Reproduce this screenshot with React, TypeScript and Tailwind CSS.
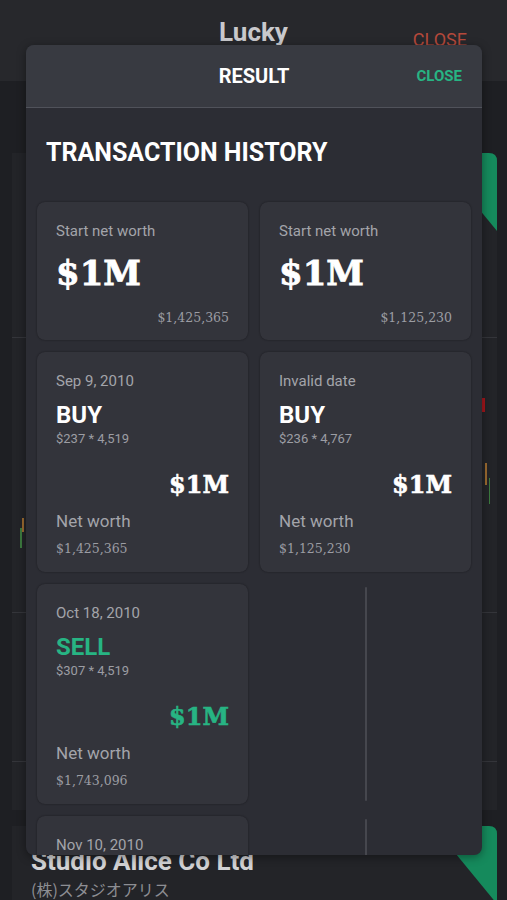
import React from 'react';

type Tx = {
  date: string;
  side: 'BUY' | 'SELL';
  price: string;
  amount: string;
  netWorth: string;
};

const startCards = [{ value: '$1,425,365' }, { value: '$1,125,230' }];

const rows: Array<[Tx, Tx | null]> = [
  [
    { date: 'Sep 9, 2010', side: 'BUY', price: '$237 * 4,519', amount: '$1M', netWorth: '$1,425,365' },
    { date: 'Invalid date', side: 'BUY', price: '$236 * 4,767', amount: '$1M', netWorth: '$1,125,230' },
  ],
  [{ date: 'Oct 18, 2010', side: 'SELL', price: '$307 * 4,519', amount: '$1M', netWorth: '$1,743,096' }, null],
  [{ date: 'Nov 10, 2010', side: 'BUY', price: '$262 * 4,519', amount: '$1M', netWorth: '$1,502,118' }, null],
];

function Ribbon() {
  return (
    <svg width="64" height="78" viewBox="0 0 64 78" className="block">
      <path d="M0 0 H56 Q64 0 64 8 V78 Z" fill="#158a5c" />
    </svg>
  );
}

function StartCard({ value }: { value: string }) {
  return (
    <div className="flex h-[138px] flex-col rounded-lg bg-[#33343b] px-[19px] pt-[19px] shadow-[0_0_2px_rgba(0,0,0,0.45)]">
      <div className="text-[15px] leading-5 text-[#a3a4aa]">Start net worth</div>
      <div className="mt-3 font-['DejaVu_Serif',serif] text-[34px] font-bold leading-10 text-white [-webkit-text-stroke:0.8px_currentColor]">
        $1M
      </div>
      <div className="mt-[17px] text-right font-['DejaVu_Serif',serif] text-[12.5px] leading-4 text-[#9c9da3]">{value}</div>
    </div>
  );
}

function TxCard({ tx }: { tx: Tx }) {
  const sell = tx.side === 'SELL';
  return (
    <div className="flex h-[220px] flex-col rounded-lg bg-[#33343b] px-[19px] pt-[19px] shadow-[0_0_2px_rgba(0,0,0,0.45)]">
      <div className="text-[15px] leading-5 text-[#a3a4aa]">{tx.date}</div>
      <div className={`mt-[10px] text-[24px] font-bold leading-7 ${sell ? 'text-[#27b483]' : 'text-white'}`}>{tx.side}</div>
      <div className="mt-[2px] text-[13px] leading-4 text-[#9c9da3]">{tx.price}</div>
      <div
        className={`mt-[23px] text-right font-['DejaVu_Serif',serif] text-[24px] font-bold leading-[30px] [-webkit-text-stroke:0.6px_currentColor] ${
          sell ? 'text-[#27b483]' : 'text-white'
        }`}
      >
        {tx.amount}
      </div>
      <div className="mt-[10px] text-[17px] leading-[22px] text-[#a3a4aa]">Net worth</div>
      <div className="mt-[9px] font-['DejaVu_Serif',serif] text-[12.5px] leading-4 text-[#9c9da3]">{tx.netWorth}</div>
    </div>
  );
}

function EmptyCell() {
  return (
    <div className="flex h-[220px] justify-center py-[3px]">
      <div className="w-[2px] rounded-full bg-[#46474e]" />
    </div>
  );
}

export default function App() {
  return (
    <div className="relative h-[900px] w-[507px] overflow-hidden bg-[#1e1f23] font-['Roboto',sans-serif]">
      {/* page behind the dialog */}
      <div className="relative flex h-[81px] justify-center bg-[#27282c]">
        <div className="pt-[16px] text-[26px] font-bold leading-8 text-[#c9c9cc]">Lucky</div>
        <div className="absolute right-[40px] top-[28px] text-[18px] leading-6 text-[#b5493b]">CLOSE</div>
      </div>
      <div className="pl-[12px] pr-[10px] pt-[72px]">
        <div className="relative h-[657px] rounded-tr-lg bg-[#232428]">
          <div className="absolute right-0 top-0">
            <Ribbon />
          </div>
          <div className="h-[185px] border-b border-[#34353a]" />
          <div className="relative h-[275px] border-b border-[#34353a]">
            <div className="absolute right-[12px] top-[60px] h-[14px] w-[3px] bg-[#a3161c]" />
            <div className="absolute right-[10px] top-[125px] h-[22px] w-[2px] bg-[#9a6a30]" />
            <div className="absolute right-[7px] top-[140px] h-[26px] w-[1px] bg-[#3c7a3f]" />
            <div className="absolute left-[10px] top-[180px] h-[14px] w-[2px] bg-[#9a6a30]" />
            <div className="absolute left-[8px] top-[190px] h-[20px] w-[2px] bg-[#3c7a3f]" />
          </div>
          <div className="h-[149px] border-b border-[#34353a]" />
        </div>
        <div className="relative mt-[16px] h-[120px] rounded-tr-lg bg-[#232428] pl-[19px] pt-[19px]">
          <div className="absolute right-0 top-0">
            <Ribbon />
          </div>
          <div className="text-[26px] font-bold leading-8 text-[#d2d2d4]">Studio Alice Co Ltd</div>
          <div className="font-['Noto_Sans_CJK_JP',sans-serif] text-[16px] leading-6 text-[#8d8e93]">(株)スタジオアリス</div>
        </div>
      </div>

      {/* result dialog */}
      <div className="absolute left-[26px] top-[45px] flex h-[810px] w-[456px] flex-col overflow-hidden rounded-lg bg-[#2c2d34] shadow-[0_2px_10px_rgba(0,0,0,0.4)]">
        <div className="relative flex h-[63px] shrink-0 items-center justify-center border-b border-[#50525a] bg-[#383a41]">
          <span className="text-[20px] font-bold text-white">RESULT</span>
          <button className="absolute right-[20px] text-[15px] font-bold text-[#27b483]">CLOSE</button>
        </div>
        <div className="px-[11px] pt-[30px]">
          <h2 className="pl-[9px] text-[25px] font-bold leading-[30px] text-white">TRANSACTION HISTORY</h2>
          <div className="mt-[34px] grid grid-cols-2 gap-3">
            {startCards.map((c) => (
              <StartCard key={c.value} value={c.value} />
            ))}
            {rows.map(([a, b], i) => (
              <React.Fragment key={i}>
                <TxCard tx={a} />
                {b ? <TxCard tx={b} /> : <EmptyCell />}
              </React.Fragment>
            ))}
          </div>
        </div>
      </div>
    </div>
  );
}
